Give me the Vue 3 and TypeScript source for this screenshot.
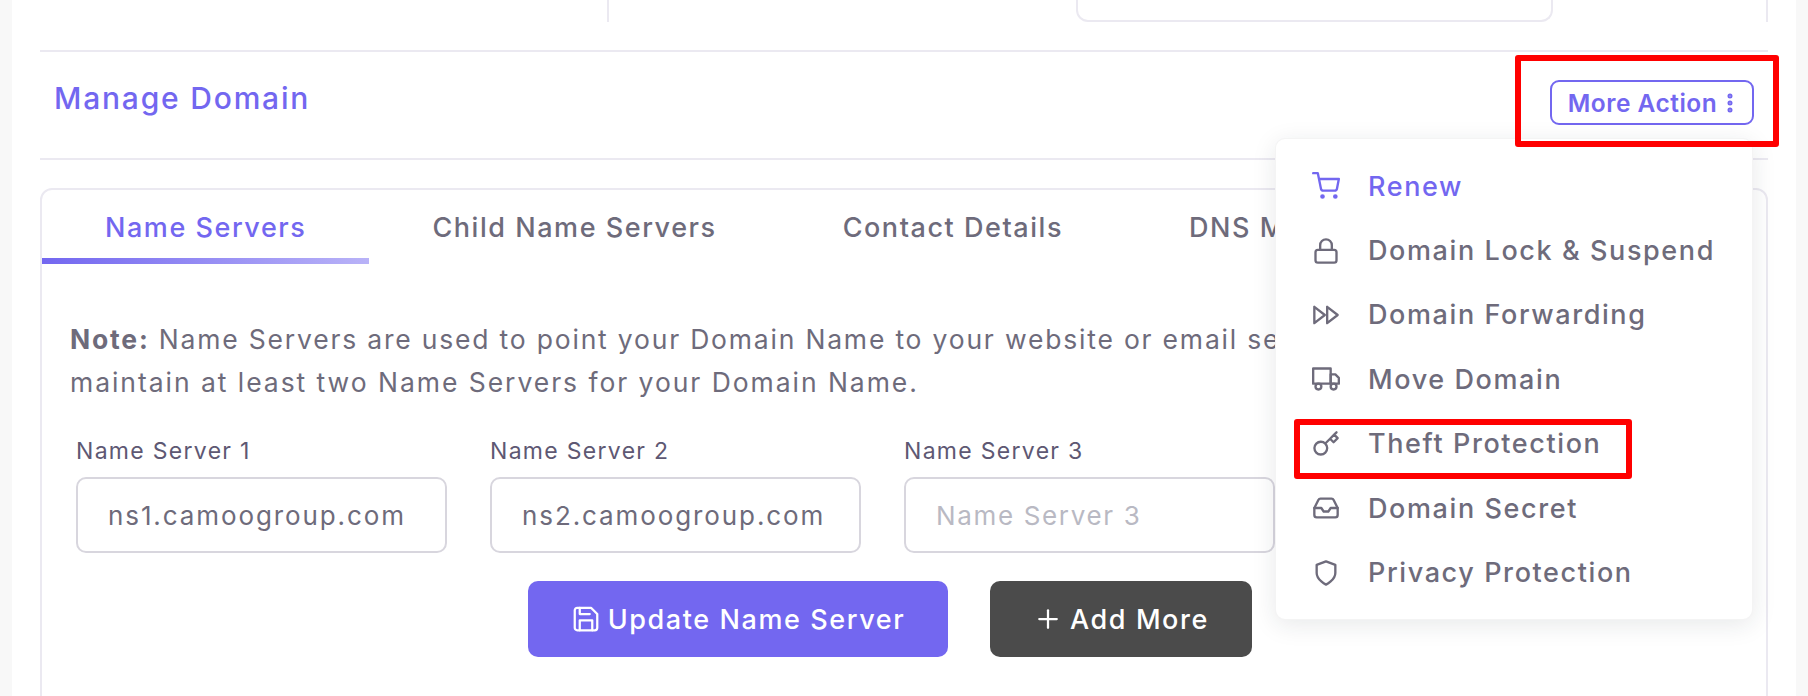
<script setup lang="ts">
const items = [
  { key: 'cart', label: 'Renew', active: true },
  { key: 'lock', label: 'Domain Lock & Suspend', active: false },
  { key: 'forward', label: 'Domain Forwarding', active: false },
  { key: 'truck', label: 'Move Domain', active: false },
  { key: 'key', label: 'Theft Protection', active: false },
  { key: 'inbox', label: 'Domain Secret', active: false },
  { key: 'shield', label: 'Privacy Protection', active: false },
]
const tabs = ['Name Servers', 'Child Name Servers', 'Contact Details', 'DNS Management']
const fields = [
  { label: 'Name Server 1', value: 'ns1.camoogroup.com' },
  { label: 'Name Server 2', value: 'ns2.camoogroup.com' },
  { label: 'Name Server 3', value: '' },
]
</script>

<template>
  <div class="page">
    <div class="card">
      <div class="strip">
        <div class="strip-a"></div>
        <div class="strip-b"><div class="strip-box"></div></div>
      </div>

      <header class="head">
        <h2 class="title">Manage Domain</h2>
        <button class="more">
          More Action
          <svg class="more-dots" viewBox="0 0 24 24" fill="none" stroke="currentColor" stroke-width="3" stroke-linecap="round" stroke-linejoin="round">
            <circle cx="12" cy="12" r="1" /><circle cx="12" cy="5" r="1" /><circle cx="12" cy="19" r="1" />
          </svg>
        </button>
      </header>

      <section class="panel">
        <nav class="tabs">
          <a v-for="(t, i) in tabs" :key="t" class="tab" :class="{ on: i === 0 }">{{ t }}</a>
        </nav>
        <div class="panel-body">
          <p class="note"><span class="line-one"><b>Note:</b> Name Servers are used to point your Domain Name to your website or email server. You</span><br />maintain at least two Name Servers for your Domain Name.</p>
          <div class="fields">
            <div v-for="f in fields" :key="f.label" class="field">
              <label class="lbl">{{ f.label }}</label>
              <input class="inp" :value="f.value" :placeholder="f.label" />
            </div>
          </div>
          <div class="actions">
            <button class="btn primary">
              <svg class="btn-ico" viewBox="0 0 24 24" fill="none" stroke="currentColor" stroke-width="1.8" stroke-linecap="round" stroke-linejoin="round">
                <path d="M19 21H5a2 2 0 0 1-2-2V5a2 2 0 0 1 2-2h11l5 5v11a2 2 0 0 1-2 2z" />
                <polyline points="17 21 17 13 7 13 7 21" /><polyline points="7 3 7 8 15 8" />
              </svg>
              Update Name Server
            </button>
            <button class="btn dark">
              <svg class="btn-ico" viewBox="0 0 24 24" fill="none" stroke="currentColor" stroke-width="1.8" stroke-linecap="round" stroke-linejoin="round">
                <line x1="12" y1="5" x2="12" y2="19" /><line x1="5" y1="12" x2="19" y2="12" />
              </svg>
              Add More
            </button>
          </div>
        </div>
      </section>

      <ul class="menu">
        <li v-for="it in items" :key="it.key" class="menu-item" :class="{ on: it.active }">
          <svg class="menu-ico" viewBox="0 0 24 24" fill="none" stroke="currentColor" stroke-width="2" stroke-linecap="round" stroke-linejoin="round">
            <template v-if="it.key === 'cart'">
              <circle cx="9" cy="21" r="1" /><circle cx="20" cy="21" r="1" />
              <path d="M1 1h4l2.68 13.39a2 2 0 0 0 2 1.61h9.72a2 2 0 0 0 2-1.61L23 6H6" />
            </template>
            <template v-else-if="it.key === 'lock'">
              <rect x="3" y="11" width="18" height="11" rx="2" ry="2" /><path d="M7 11V7a5 5 0 0 1 10 0v4" />
            </template>
            <template v-else-if="it.key === 'forward'">
              <polygon points="13 19 22 12 13 5 13 19" /><polygon points="2 19 11 12 2 5 2 19" />
            </template>
            <template v-else-if="it.key === 'truck'">
              <rect x="1" y="3" width="15" height="13" /><polygon points="16 8 20 8 23 11 23 16 16 16 16 8" />
              <circle cx="5.5" cy="18.5" r="2.5" /><circle cx="18.5" cy="18.5" r="2.5" />
            </template>
            <template v-else-if="it.key === 'key'">
              <path d="M21 2l-2 2m-7.61 7.61a5.5 5.5 0 1 1-7.778 7.778 5.5 5.5 0 0 1 7.777-7.777zm0 0L15.5 7.5m0 0l3 3L22 7l-3-3m-3.5 3.5L19 4" />
            </template>
            <template v-else-if="it.key === 'inbox'">
              <polyline points="22 12 16 12 14 15 10 15 8 12 2 12" />
              <path d="M5.45 5.11L2 12v6a2 2 0 0 0 2 2h16a2 2 0 0 0 2-2v-6l-3.45-6.89A2 2 0 0 0 16.76 4H7.24a2 2 0 0 0-1.79 1.11z" />
            </template>
            <template v-else>
              <path d="M12 22s8-4 8-10V5l-8-3-8 3v7c0 6 8 10 8 10z" />
            </template>
          </svg>
          <span>{{ it.label }}</span>
        </li>
      </ul>

      <div class="mark mark-more"></div>
      <div class="mark mark-theft"></div>
    </div>
  </div>
</template>

<style>
html, body { margin: 0; background: #f8f8f8; }
</style>

<style scoped>
.page {
  height: 696px;
  overflow: hidden;
  background: #f8f8f8;
  font-family: Inter, "Liberation Sans", sans-serif;
  color: #6e6b7b;
}
.card {
  position: relative;
  box-sizing: border-box;
  margin-left: 12px;
  width: 1784px;
  height: 696px;
  padding: 0 28px;
  background: #fff;
  overflow: hidden;
}
.strip { display: flex; height: 22px; margin-bottom: 28px; border-right: 2px solid #ebe9f1; }
.strip-a { width: 567px; border-right: 2px solid #ebe9f1; }
.strip-b { flex: 1; padding-left: 467px; }
.strip-box { box-sizing: border-box; width: 477px; height: 22px; border: 2px solid #ebe9f1; border-top: 0; border-radius: 0 0 12px 12px; }
.head {
  box-sizing: border-box;
  display: flex;
  justify-content: space-between;
  align-items: flex-start;
  height: 110px;
  padding: 28px 14px 0 15px;
  border-top: 2px solid #ebe9f1;
  border-bottom: 2px solid #ebe9f1;
}
.title { margin: 1px 0 0 -1px; font-size: 30px; line-height: 34px; font-weight: 500; color: #7367f0; letter-spacing: 1.8px; }
.more {
  box-sizing: border-box;
  width: 204px;
  height: 45px;
  display: flex;
  align-items: center;
  justify-content: center;
  padding: 0;
  border: 2px solid #7367f0;
  border-radius: 9px;
  background: #fff;
  color: #7367f0;
  font: 600 24.5px Inter, sans-serif;
  letter-spacing: .5px;
}
.more-dots { width: 24px; height: 24px; margin-left: 1px; margin-right: -6px; }
.panel {
  box-sizing: border-box;
  margin-top: 28px;
  height: 540px;
  border: 2px solid #ebe9f1;
  border-radius: 12px;
}
.tabs { display: flex; height: 74px; }
.tab {
  padding: 0 63px;
  height: 74px;
  box-sizing: border-box;
  font-size: 27px;
  line-height: 76px;
  font-weight: 500;
  white-space: nowrap;
  letter-spacing: 1.55px;
  color: #6e6b7b;
}
.tab.on { color: #7367f0; background: linear-gradient(90deg, #7367f0, rgba(115, 103, 240, .5)) no-repeat left bottom / 100% 6px; }
.panel-body { padding: 54px 0 0 28px; }
.note { margin: 0; font-size: 26.5px; line-height: 43px; white-space: nowrap; letter-spacing: 1.95px; }
.line-one { letter-spacing: 1.8px; }
.note b { font-weight: 700; }
.fields { display: flex; gap: 43px; margin: 35px 0 0 6px; }
.field { display: flex; flex-direction: column; width: 371px; }
.lbl { font-size: 23px; line-height: 24px; color: #5e5873; margin-bottom: 14px; letter-spacing: 1.3px; }
.inp {
  box-sizing: border-box;
  width: 371px;
  height: 76px;
  padding: 0 30px;
  border: 2px solid #d8d6de;
  border-radius: 10px;
  font: 400 26px Inter, sans-serif;
  letter-spacing: 1.9px;
  color: #6e6b7b;
  outline: none;
}
.inp::placeholder { color: #b9b9c3; opacity: 1; letter-spacing: 1.65px; }
.actions { display: flex; gap: 42px; margin-top: 28px; padding-left: 458px; }
.btn {
  height: 76px;
  display: flex;
  align-items: center;
  justify-content: center;
  gap: 7px;
  border: 0;
  border-radius: 10px;
  color: #fff;
  font: 500 27px Inter, sans-serif;
  letter-spacing: 1.6px;
  padding: 0;
}
.primary { width: 420px; background: #7367f0; }
.dark { width: 262px; background: #4b4b4b; }
.btn-ico { width: 30px; height: 30px; }
.menu {
  position: absolute;
  left: 1263px;
  top: 138px;
  box-sizing: border-box;
  width: 478px;
  height: 482px;
  margin: 0;
  padding: 15px 0 0;
  list-style: none;
  background: #fff;
  border: 1px solid rgba(34, 41, 47, .05);
  border-radius: 10px;
  box-shadow: 0 5px 25px rgba(34, 41, 47, .1);
}
.menu-item {
  display: flex;
  align-items: center;
  height: 64.4px;
  padding-left: 36px;
  font-size: 27px;
  font-weight: 500;
  letter-spacing: 1.6px;
  white-space: nowrap;
}
.menu-item.on { color: #7367f0; }
.menu-ico { width: 28px; height: 28px; margin-right: 28px; flex: none; }
.mark { position: absolute; box-sizing: border-box; border: 6px solid #f00; border-radius: 3px; pointer-events: none; }
.mark-more { left: 1503px; top: 55px; width: 264px; height: 92px; }
.mark-theft { left: 1282px; top: 419px; width: 338px; height: 60px; }
</style>
